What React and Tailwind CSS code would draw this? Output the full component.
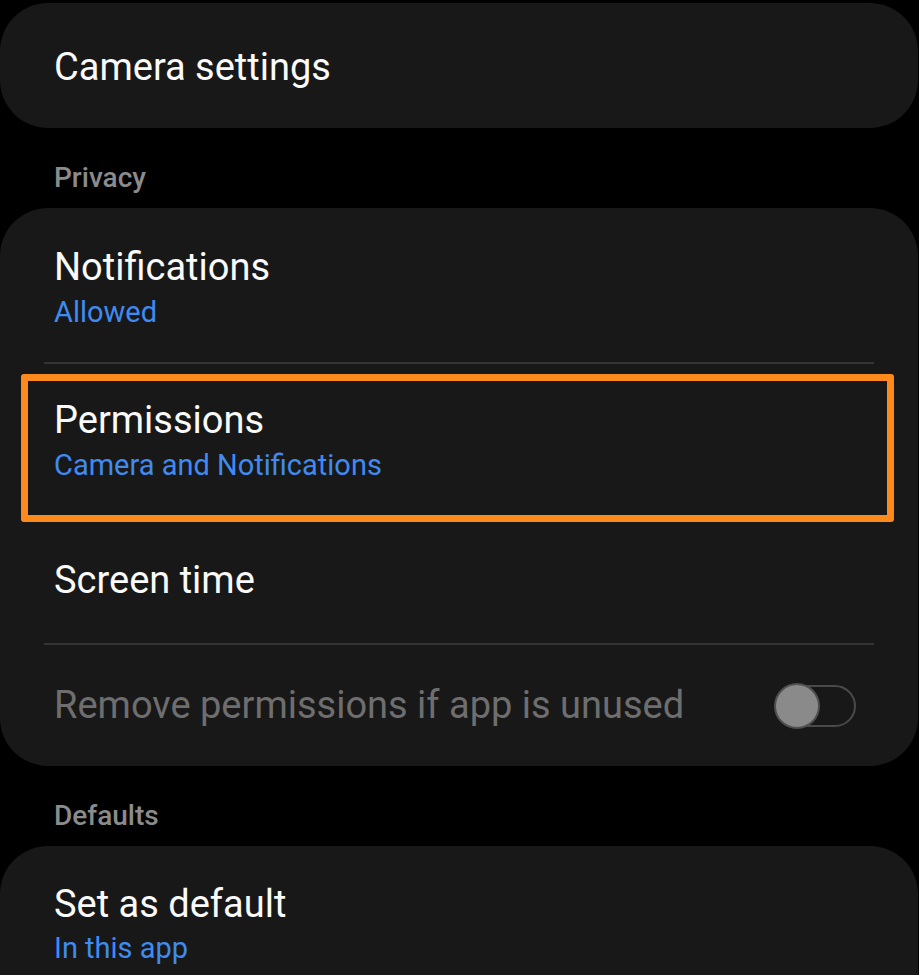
import React from "react";

const font = { fontFamily: "Roboto, 'Noto Sans', sans-serif" };

function SectionHeader({ children }) {
    return (
        <div className="pt-[34px] pb-[14px] pl-[54px] text-[28px] leading-[32px] font-medium text-[#8b8b8b]">
            {children}
        </div>
    );
}

function Row({ title, subtitle, className = "" }) {
    return (
        <div className={`flex flex-col justify-center pl-[54px] ${className}`}>
            <div className="text-[38px] leading-[44px] text-[#fafafa]">{title}</div>
            {subtitle && (
                <div className="mt-[6px] text-[29px] leading-[34px] text-[#3f8bf0]">{subtitle}</div>
            )}
        </div>
    );
}

function Divider() {
    return <div className="mx-[44px] h-[2px] bg-[#343434]" />;
}

function Toggle() {
    return (
        <div className="relative w-[82px] h-[46px] flex items-center">
            <div className="absolute left-[1px] right-0 top-[2px] bottom-[2px] rounded-full border-2 border-[#4a4a4a]" />
            <div className="relative w-[46px] h-[46px] rounded-full bg-[#8a8a8a] border-2 border-[#505050]" />
        </div>
    );
}

export default function App() {
    return (
        <div className="h-[975px] w-full bg-black overflow-hidden pt-[3px]" style={font}>
            <div className="mr-[1px] h-[125px] rounded-[48px] bg-[#181818] flex items-center pl-[54px] pt-[2px]">
                <span className="text-[38px] leading-[44px] text-[#fafafa]">Camera settings</span>
            </div>

            <SectionHeader>Privacy</SectionHeader>

            <div className="mr-[1px] rounded-[48px] bg-[#181818]">
                <Row title="Notifications" subtitle="Allowed" className="h-[154px] pt-[4px]" />
                <Divider />
                <div className="relative">
                    <Row title="Permissions" subtitle="Camera and Notifications" className="h-[156px] pb-[4px]" />
                    <div className="absolute left-[21px] right-[24px] top-[10px] h-[148px] border-[7px] border-[#ff8a1c] rounded-[3px]" />
                </div>
                <Row title="Screen time" className="h-[123px] pb-[4px]" />
                <Divider />
                <div className="h-[121px] flex items-center justify-between pl-[54px] pr-[62px]">
                    <span className="text-[38px] leading-[44px] text-[#6e6e6e] -mt-[2px]">Remove permissions if app is unused</span>
                    <Toggle />
                </div>
            </div>

            <SectionHeader>Defaults</SectionHeader>

            <div className="mr-[1px] h-[200px] rounded-[48px] bg-[#181818] pt-[36px] pl-[54px]">
                <div className="text-[38px] leading-[44px] text-[#fafafa]">Set as default</div>
                <div className="mt-[5px] text-[29px] leading-[34px] text-[#3f8bf0]">In this app</div>
            </div>
        </div>
    );
}
